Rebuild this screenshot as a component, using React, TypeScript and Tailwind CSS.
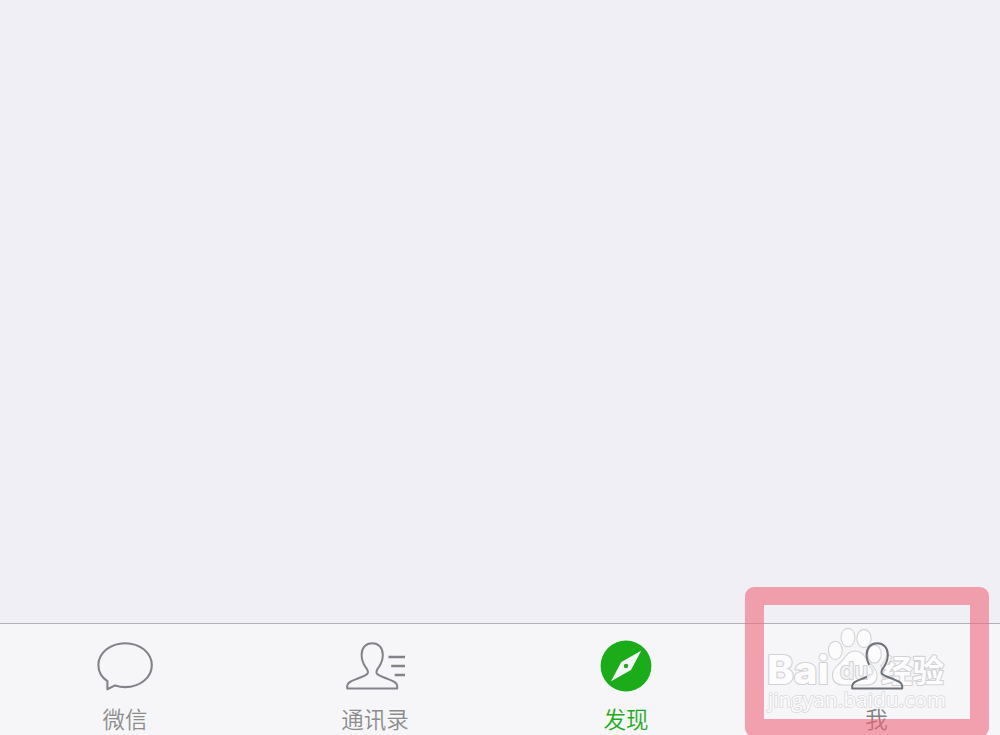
import React from 'react';

const TABS = [
  { id: 'chats', label: '微信' },
  { id: 'contacts', label: '通讯录' },
  { id: 'discover', label: '发现' },
  { id: 'me', label: '我' },
];

const LABEL_STYLES: Record<string, string> = {
  chats: 'text-[#8c8c8c]',
  contacts: 'text-[#8c8c8c]',
  discover: 'pl-[2px] text-[#1aad19]',
  me: 'pl-[3px] text-[#808080]',
};

const PERSON =
  'M11 47.2H2V44.5C2 41.5 5.5 40 11 37.8C17 35.4 21.6 34.2 22.6 31.8C23.3 29.8 22.2 28.2 20.4 25.8C17.4 21.6 16.4 17.5 16.4 13.5C16.4 6.5 20.6 2 27 2C33.4 2 37.6 6.5 37.6 13.5C37.6 17.5 36.6 21.6 33.6 25.8C31.8 28.2 30.7 29.8 31.4 31.8C32.4 34.2 37 35.4 43 37.8C48.5 40 52 41.5 52 44.5V47.2Z';

function TabIcon({ id }: { id: string }) {
  if (id === 'chats') {
    return (
      <svg width="60" height="52" viewBox="0 0 60 52" fill="none" stroke="#818388" strokeWidth="2.1" strokeLinejoin="round">
        <path d="M30.2 3.2C45 3.2 56.8 12.8 56.8 25.2C56.8 37.6 45 47.1 30.2 47.1C26.5 47.1 23.2 46.4 20 45.4L12.4 49.2V41.2C6.9 37.4 3.4 31.7 3.4 25.2C3.4 12.8 15.4 3.2 30.2 3.2Z" />
      </svg>
    );
  }
  if (id === 'contacts') {
    return (
      <svg width="61" height="52" viewBox="0 0 61 52" fill="none" stroke="#818388" strokeWidth="2" strokeLinejoin="round">
        <path d={PERSON} transform="translate(.2 1.3)" />
        <path d="M43.5 17H60M46.2 26H60M49.7 35H60" strokeWidth="2.3" />
      </svg>
    );
  }
  if (id === 'discover') {
    return (
      <svg width="62" height="52" viewBox="0 0 62 52">
        <circle cx="32" cy="26" r="25.4" fill="#1aad19" />
        <path d="M47.2 10.8L37 30L17 41.2L27.3 22Z" fill="#f7f7fa" />
        <circle cx="32" cy="26" r="2.2" fill="#1aad19" />
      </svg>
    );
  }
  return (
    <svg width="54" height="52" viewBox="0 0 54 52" fill="none" stroke="#6f7279" strokeWidth="2" strokeLinejoin="round" className="relative left-[1.7px]">
      <path d={PERSON} transform="translate(.2 1.3)" />
      {/* neck fades where the paw covers it */}
      <path d="M19 25C21 27.6 23.4 30.2 22.8 33.1C21.8 35.5 19.5 36.4 17 37.2" stroke="#f8f8fa" strokeOpacity=".85" strokeWidth="2.8" />
    </svg>
  );
}

function Watermark() {
  return (
    <svg
      className="absolute left-[760px] top-[620px]"
      width="200"
      height="100"
      viewBox="0 0 200 100"
      fill="#fcfcfd"
      stroke="#d2d2d5"
      strokeWidth="2.2"
      strokeLinejoin="round"
      paintOrder="stroke"
    >
      <text x="7" y="64" fontSize="39" fontWeight="800" textLength="62" lengthAdjust="spacingAndGlyphs" fontFamily="Inter, sans-serif">Bai</text>
      <g strokeWidth="2.1">
        <ellipse cx="75.3" cy="30.3" rx="6.4" ry="8.6" />
        <ellipse cx="88" cy="17.5" rx="6.4" ry="8.8" />
        <ellipse cx="104" cy="18.5" rx="6.6" ry="8.6" />
        <ellipse cx="114.5" cy="34" rx="6.2" ry="8.6" />
        <path d="M95 31.5C101 31.5 103.5 35.5 107 40.5C111 45.5 116.5 48.5 116.5 55.5C116.5 61.5 112.5 64.5 106 64.5H84C77 64.5 73 61 73 55C73 48 79 45.5 83 40.5C87 35.5 89 31.5 95 31.5Z" />
      </g>
      <text x="80" y="59" fontSize="23" fontWeight="500" textLength="28" lengthAdjust="spacingAndGlyphs" fill="#f4f4f6" fontFamily="Inter, sans-serif">du</text>
      <text x="121" y="61.5" fontSize="31" fontWeight="700" textLength="63" lengthAdjust="spacingAndGlyphs" fontFamily="'Noto Sans CJK SC', sans-serif">经验</text>
      <text x="8" y="87" fontSize="20.5" strokeWidth="1.7" stroke="#d9d9dc" textLength="178" fontFamily="'Open Sans', sans-serif">jingyan.baidu.com</text>
    </svg>
  );
}

export default function App() {
  return (
    <div className="relative flex h-[735px] w-[1000px] flex-col overflow-hidden bg-[#efeff5] font-['Noto_Sans_CJK_SC',sans-serif]">
      <main className="flex-1" />

      {/* Tab bar */}
      <nav className="grid h-[112px] grid-cols-4 border-t border-[#b2b2b6] bg-[#f6f6f9]">
        {TABS.map(tab => (
          <button key={tab.id} type="button" className="flex flex-col items-center pt-4">
            <span className="relative z-10 block h-[52px]">
              <TabIcon id={tab.id} />
            </span>
            <span className={`relative z-10 mt-[9.5px] text-[22.5px] font-[350] leading-8 ${LABEL_STYLES[tab.id]}`}>
              {tab.label}
            </span>
          </button>
        ))}
      </nav>

      <Watermark />

      {/* Highlight around the last tab */}
      <div className="absolute left-[745px] top-[587.4px] z-20 h-[150px] w-[244px] rounded-[9px] border-x-[19px] border-y-[18px] border-[#f2687b]/60" />
    </div>
  );
}
